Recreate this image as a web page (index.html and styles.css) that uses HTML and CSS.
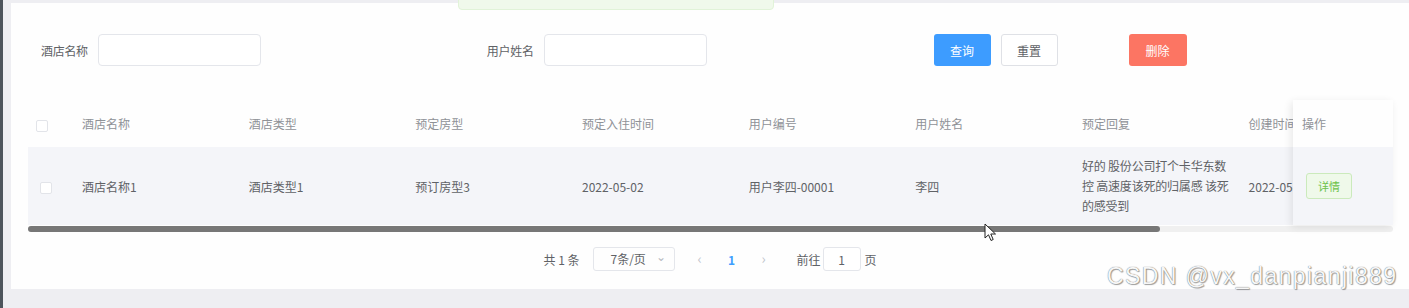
FILE: index.html
```html
<!DOCTYPE html>
<html lang="zh-CN">

<head>
    <meta charset="UTF-8">
    <meta name="viewport" content="width=device-width, initial-scale=1.0">
    <title>预定管理</title>
    <link rel="stylesheet" href="styles.css">
</head>

<body>

    <div class="layout">
        <div class="sidebar"></div>
        <div class="main">
            <div class="panel">
                <!-- search bar -->
                <form class="search" onsubmit="return false">
                    <div class="form-item">
                        <label>酒店名称</label>
                        <input class="text-input" type="text">
                    </div>
                    <div class="form-item second">
                        <label>用户姓名</label>
                        <input class="text-input" type="text">
                    </div>
                    <button class="btn btn-primary">查询</button>
                    <button class="btn btn-default">重置</button>
                    <button class="btn btn-danger">删除</button>
                </form>

                <!-- table -->
                <div class="table-wrap">
                    <table class="grid">
                        <colgroup>
                            <col class="col-check">
                            <col class="col-data">
                            <col class="col-data">
                            <col class="col-data">
                            <col class="col-data">
                            <col class="col-data">
                            <col class="col-data">
                            <col class="col-data">
                            <col>
                        </colgroup>
                        <thead>
                            <tr>
                                <th class="check-cell"><span class="checkbox"></span></th>
                                <th>酒店名称</th>
                                <th>酒店类型</th>
                                <th>预定房型</th>
                                <th>预定入住时间</th>
                                <th>用户编号</th>
                                <th>用户姓名</th>
                                <th>预定回复</th>
                                <th>创建时间</th>
                            </tr>
                        </thead>
                        <tbody>
                            <tr>
                                <td class="check-cell"><span class="checkbox row-check"></span></td>
                                <td>酒店名称1</td>
                                <td>酒店类型1</td>
                                <td>预订房型3</td>
                                <td>2022-05-02</td>
                                <td>用户李四-00001</td>
                                <td>李四</td>
                                <td class="wrap">好的 股份公司打个卡华东数<br>控 高速度该死的归属感 该死<br>的感受到</td>
                                <td>2022-05-02</td>
                            </tr>
                        </tbody>
                    </table>

                    <!-- fixed right column -->
                    <div class="fixed-col">
                        <div class="fixed-head">操作</div>
                        <div class="fixed-cell"><button class="btn-detail">详情</button></div>
                    </div>

                    <div class="scrollbar"><div class="thumb"></div></div>
                </div>

                <!-- pagination -->
                <div class="pager">
                    <span class="total">共 1 条</span>
                    <div class="size-select">7条/页<span class="arrow">&#8964;</span></div>
                    <span class="nav prev">&lsaquo;</span>
                    <span class="page active">1</span>
                    <span class="nav next">&rsaquo;</span>
                    <span class="jump">前往</span>
                    <input class="jump-input" type="text" value="1">
                    <span class="jump-end">页</span>
                </div>
            </div>
        </div>
    </div>

    <div class="toast"></div>
    <div class="watermark">CSDN @vx_danpianji889</div>

    <svg class="cursor" width="13" height="19" viewBox="0 0 13 19">
        <path d="M1 1 L1 15 L4.5 11.8 L7 17.5 L9.2 16.5 L6.8 11 L11.5 11 Z" fill="#fff" stroke="#222" stroke-width="1" stroke-linejoin="round" />
    </svg>

</body>

</html>
```

FILE: styles.css
```css
/* General Body Styling */
body {
    margin: 0;
    padding: 0;
    font-family: "Noto Sans CJK SC", "Noto Sans", sans-serif;
    font-size: 12px;
    color: #606266;
    background: #efeff3;
    overflow: hidden;
}

.layout {
    display: flex;
    height: 308px;
}

.sidebar {
    width: 3px;
    background: #4d545c;
}

.main {
    flex: 1;
    padding: 3px 0 0 8px;
    background: #eeeef2;
}

.panel {
    height: 286px;
    background: #fefefe;
    padding-left: 17px;
    box-sizing: border-box;
    overflow: hidden;
}

/* Search Bar */
.search {
    display: flex;
    align-items: center;
    height: 32px;
    padding-top: 31px;
    padding-left: 13px;
}

.form-item {
    display: flex;
    align-items: center;
    margin-right: 226px;
}

.form-item label {
    color: #606266;
    margin-right: 10px;
    letter-spacing: -0.3px;
}

.form-item.second {
    margin-right: 227px;
}

.text-input {
    width: 163px;
    height: 32px;
    box-sizing: border-box;
    border: 1px solid #e4e6eb;
    border-radius: 4px;
    background: #fff;
    outline: none;
}

.btn {
    height: 32px;
    width: 57px;
    border-radius: 3px;
    font-family: inherit;
    font-size: 12px;
    border: 1px solid transparent;
    padding: 0;
    cursor: pointer;
}

.btn-primary {
    background: #3d9cff;
    color: #fff;
}

.btn-default {
    background: #fff;
    border-color: #dfe1e6;
    color: #606266;
    margin-left: 10px;
}

.btn-danger {
    background: #fc7563;
    color: #fff;
    margin-left: 71px;
    width: 58px;
}

/* Table */
.table-wrap {
    position: relative;
    width: 1365px;
    margin-top: 34px;
}

.grid {
    width: 100%;
    table-layout: fixed;
    border-collapse: collapse;
}

.col-check {
    width: 44px;
}

.col-data {
    width: 166.67px;
}

.grid th,
.grid td {
    text-align: left;
    padding: 0 10px;
    white-space: nowrap;
    overflow: hidden;
}

.grid th {
    height: 47px;
    font-weight: normal;
    color: #8f9297;
    background: #fefefe;
}

.grid td {
    height: 78px;
    background: #f4f5f9;
    color: #606266;
}

.grid td.wrap {
    line-height: 20px;
    padding-right: 0;
    letter-spacing: -0.2px;
}

.grid .check-cell {
    padding: 0 0 0 8px;
}

.checkbox {
    display: inline-block;
    width: 12px;
    height: 12px;
    border: 1px solid #e2e4e9;
    border-radius: 2px;
    background: #fff;
    box-sizing: border-box;
    vertical-align: middle;
}

.row-check {
    margin-left: 4px;
}

.fixed-col {
    position: absolute;
    top: 0;
    right: 0;
    width: 100px;
    box-shadow: -2px 2px 8px rgba(0, 0, 0, 0.09);
}

.fixed-head {
    height: 47px;
    line-height: 47px;
    padding-left: 9px;
    color: #8f9297;
    background: #fefefe;
}

.fixed-cell {
    height: 78px;
    display: flex;
    align-items: center;
    padding-left: 13px;
    background: #f4f5f9;
}

.btn-detail {
    width: 46px;
    height: 26px;
    padding: 0;
    border: 1px solid #cbeabc;
    border-radius: 3px;
    background: #eff9ea;
    color: #6cc24a;
    font-family: inherit;
    font-size: 11px;
}

.scrollbar {
    height: 6px;
    margin-top: 1px;
    background: #f0f0f0;
    border-radius: 3px;
}

.thumb {
    width: 1132px;
    height: 6px;
    background: #777;
    border-radius: 3px;
}

/* Pagination */
.pager {
    display: flex;
    align-items: center;
    justify-content: center;
    height: 24px;
    margin-top: 15px;
    margin-left: -17px;
    color: #606266;
}

.size-select {
    position: relative;
    width: 82px;
    height: 24px;
    box-sizing: border-box;
    border: 1px solid #e4e6eb;
    border-radius: 3px;
    margin-left: 13px;
    padding-left: 17px;
    line-height: 22px;
}

.size-select .arrow {
    position: absolute;
    right: 8px;
    top: -3px;
    color: #b8bbc2;
    font-size: 12px;
}

.nav {
    width: 30px;
    height: 24px;
    line-height: 22px;
    text-align: center;
    color: #c0c4cc;
    font-size: 14px;
}

.nav.prev {
    margin-left: 10px;
}

.page {
    width: 30px;
    margin: 0 2px;
    text-align: center;
    font-weight: bold;
}

.page.active {
    color: #409eff;
}

.jump {
    margin-left: 18px;
}

.jump-input {
    width: 38px;
    height: 24px;
    box-sizing: border-box;
    border: 1px solid #e4e6eb;
    border-radius: 3px;
    text-align: center;
    font-family: inherit;
    font-size: 12px;
    color: #606266;
    margin: 0 4px 0 2px;
}

/* Overlays */
.toast {
    position: absolute;
    left: 458px;
    top: -10px;
    width: 316px;
    height: 20px;
    box-sizing: border-box;
    background: #f0f9eb;
    border: 1px solid #e1f3d8;
    border-radius: 4px;
}

.watermark {
    position: absolute;
    left: 1107px;
    top: 263px;
    font-family: "Liberation Sans", Arial, sans-serif;
    font-size: 23px;
    letter-spacing: 1.4px;
    color: #f6f6f6;
    text-shadow: 0 0 1px #555, 1px 1px 1px rgba(0, 0, 0, 0.35);
    white-space: nowrap;
}

.cursor {
    position: absolute;
    left: 984px;
    top: 223px;
}
```
